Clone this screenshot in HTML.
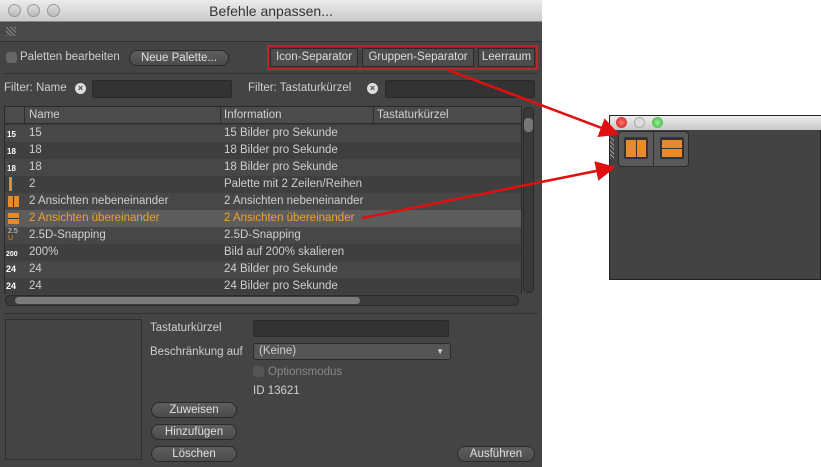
<!DOCTYPE html>
<html><head><meta charset="utf-8"><style>
*{box-sizing:border-box;margin:0;padding:0}
body{width:821px;height:467px;background:#fff;position:relative;overflow:hidden;font-family:"Liberation Sans","DejaVu Sans",sans-serif;font-size:11.5px;color:#cfcfcf}
.a{position:absolute}
.win{left:0;top:0;width:542px;height:467px;background:#444}
.tb{left:0;top:0;width:542px;height:22px;background:linear-gradient(#ececec,#c9c9c9);border-bottom:1px solid #888;color:#333;font-size:14px;text-align:center;line-height:22px}
.dot{width:13px;height:13px;border-radius:50%;background:linear-gradient(#ddd,#bbb);border:1px solid #999;top:4px}
.btn{background:linear-gradient(#5e5e5e,#4b4b4b);border:1px solid #2a2a2a;border-radius:9px;color:#e0e0e0;text-align:center;font-size:11.5px;line-height:14px;height:16px}
.sq{background:#4d4d4d;border:1px solid #2b2b2b;color:#ddd;text-align:center;line-height:17px;height:19px;font-size:11.5px}
.inp{background:#333;border:1px solid #2a2a2a;border-radius:2px}
.row{left:5px;width:516px;height:17px;line-height:17px}
.row span{position:absolute}
.ic{left:3px;top:3px;width:11px;height:11px;background:#e8892a}
</style></head><body>
<div class="a win"></div>
<div class="a tb">Befehle anpassen...</div>
<div class="a dot" style="left:8px"></div><div class="a dot" style="left:27px"></div><div class="a dot" style="left:47px"></div>
<div class="a" style="left:0;top:23px;width:542px;height:19px;background:#4a4a4a;border-bottom:1px solid #333"></div>
<div class="a" style="left:6px;top:27px;width:10px;height:9px;background:repeating-linear-gradient(45deg,#888 0 1px,transparent 1px 3px)"></div>
<div class="a" style="left:6px;top:52px;width:11px;height:11px;border-radius:3px;background:#666"></div>
<div class="a" style="left:20px;top:51px">Paletten bearbeiten</div>
<div class="a btn" style="left:129px;top:50px;width:100px">Neue Palette...</div>
<div class="a" style="left:267px;top:45px;width:271px;height:25px;border:2px solid #b8262a"></div>
<div class="a sq" style="left:270px;top:48px;width:88px">Icon-Separator</div>
<div class="a sq" style="left:362px;top:48px;width:112px">Gruppen-Separator</div>
<div class="a sq" style="left:478px;top:48px;width:57px">Leerraum</div>
<div class="a" style="left:4px;top:73px;width:534px;height:1px;background:#333"></div>
<div class="a" style="left:4px;top:82px">Filter: Name</div>
<div class="a" style="left:75px;top:83px;width:11px;height:11px;border-radius:50%;background:#ddd;color:#444;font-size:9px;line-height:11px;text-align:center;font-weight:bold">×</div>
<div class="a inp" style="left:92px;top:80px;width:140px;height:18px"></div>
<div class="a" style="left:248px;top:82px">Filter: Tastaturkürzel</div>
<div class="a" style="left:367px;top:83px;width:11px;height:11px;border-radius:50%;background:#ddd;color:#444;font-size:9px;line-height:11px;text-align:center;font-weight:bold">×</div>
<div class="a inp" style="left:385px;top:80px;width:150px;height:18px"></div>
<div class="a" style="left:4px;top:106px;width:518px;height:188px;background:#3c3c3c;border:1px solid #2a2a2a"></div>
<div class="a" style="left:5px;top:107px;width:516px;height:17px;background:#4b4b4b;border-bottom:1px solid #2e2e2e"></div>
<div class="a" style="left:24px;top:107px;width:1px;height:17px;background:#2e2e2e"></div>
<div class="a" style="left:220px;top:107px;width:1px;height:17px;background:#2e2e2e"></div>
<div class="a" style="left:373px;top:107px;width:1px;height:17px;background:#2e2e2e"></div>
<div class="a" style="left:29px;top:109px">Name</div>
<div class="a" style="left:224px;top:109px">Information</div>
<div class="a" style="left:377px;top:109px">Tastaturkürzel</div>
<div class="a row" style="top:125px;background:#474747"><span style="color:#fff;font-size:8px;font-weight:bold;left:2px;top:1px">15</span><span style="left:24px">15</span><span style="left:219px">15 Bilder pro Sekunde</span></div>
<div class="a row" style="top:142px;background:#3f3f3f"><span style="color:#fff;font-size:8px;font-weight:bold;left:2px;top:1px">18</span><span style="left:24px">18</span><span style="left:219px">18 Bilder pro Sekunde</span></div>
<div class="a row" style="top:159px;background:#474747"><span style="color:#fff;font-size:8px;font-weight:bold;left:2px;top:1px">18</span><span style="left:24px">18</span><span style="left:219px">18 Bilder pro Sekunde</span></div>
<div class="a row" style="top:176px;background:#3f3f3f"><span class="ic" style="width:3px;height:14px;top:1px;left:4px"></span><span style="left:24px">2</span><span style="left:219px">Palette mit 2 Zeilen/Reihen</span></div>
<div class="a row" style="top:193px;background:#474747"><span class="ic" style="background:linear-gradient(90deg,#e8892a 45%,#333 45% 55%,#e8892a 55%)"></span><span style="left:24px">2 Ansichten nebeneinander</span><span style="left:219px">2 Ansichten nebeneinander</span></div>
<div class="a row" style="top:210px;background:#5d5d5d;color:#f0a030"><span class="ic" style="background:linear-gradient(#e8892a 45%,#333 45% 55%,#e8892a 55%)"></span><span style="left:24px">2 Ansichten übereinander</span><span style="left:219px">2 Ansichten übereinander</span></div>
<div class="a row" style="top:227px;background:#474747"><span style="left:3px;top:1px;font-size:7px;line-height:7px;color:#ddd">2.5<br><span style="position:static;color:#e8892a">U</span></span><span style="left:24px">2.5D-Snapping</span><span style="left:219px">2.5D-Snapping</span></div>
<div class="a row" style="top:244px;background:#3f3f3f"><span style="left:1px;font-size:7px;color:#fff;font-weight:bold;top:2px">200</span><span style="left:24px">200%</span><span style="left:219px">Bild auf 200% skalieren</span></div>
<div class="a row" style="top:261px;background:#474747"><span style="left:1px;font-size:9px;color:#fff;font-weight:bold">24</span><span style="left:24px">24</span><span style="left:219px">24 Bilder pro Sekunde</span></div>
<div class="a row" style="top:278px;background:#3f3f3f;height:16px"><span style="left:1px;font-size:9px;color:#fff;font-weight:bold">24</span><span style="left:24px">24</span><span style="left:219px">24 Bilder pro Sekunde</span></div>
<div class="a" style="left:523px;top:107px;width:11px;height:186px;background:#3a3a3a;border:1px solid #2a2a2a;border-radius:5px"></div>
<div class="a" style="left:524px;top:118px;width:9px;height:14px;background:#777;border-radius:4px"></div>
<div class="a" style="left:5px;top:295px;width:514px;height:11px;background:#3a3a3a;border:1px solid #2a2a2a;border-radius:5px"></div>
<div class="a" style="left:15px;top:297px;width:345px;height:7px;background:#7a7a7a;border-radius:4px"></div>
<div class="a" style="left:4px;top:313px;width:534px;height:1px;background:#333"></div>
<div class="a" style="left:5px;top:319px;width:137px;height:141px;border:1px solid #2e2e2e"></div>
<div class="a" style="left:150px;top:322px">Tastaturkürzel</div>
<div class="a inp" style="left:253px;top:320px;width:196px;height:17px"></div>
<div class="a" style="left:150px;top:346px">Beschränkung auf</div>
<div class="a" style="left:253px;top:343px;width:198px;height:17px;background:#555;border:1px solid #2a2a2a;border-radius:3px;padding-left:5px;line-height:15px">(Keine)<span style="position:absolute;right:6px;top:0;font-size:8px">▼</span></div>
<div class="a" style="left:253px;top:366px;width:11px;height:11px;border-radius:3px;background:#555"></div>
<div class="a" style="left:268px;top:366px;color:#888">Optionsmodus</div>
<div class="a" style="left:253px;top:385px">ID 13621</div>
<div class="a btn" style="left:151px;top:402px;width:86px">Zuweisen</div>
<div class="a btn" style="left:151px;top:424px;width:86px">Hinzufügen</div>
<div class="a btn" style="left:151px;top:446px;width:86px">Löschen</div>
<div class="a btn" style="left:457px;top:446px;width:78px">Ausführen</div>
<div class="a" style="left:609px;top:115px;width:212px;height:165px;background:#434343;border:1px solid #222"></div>
<div class="a" style="left:610px;top:116px;width:211px;height:14px;background:linear-gradient(#eee,#c8c8c8)"></div>
<div class="a" style="left:616px;top:117px;width:11px;height:11px;border-radius:50%;background:radial-gradient(#f77,#c11)"></div>
<div class="a" style="left:634px;top:117px;width:11px;height:11px;border-radius:50%;background:#ddd;border:1px solid #aaa"></div>
<div class="a" style="left:652px;top:117px;width:11px;height:11px;border-radius:50%;background:radial-gradient(#9e9,#3a3)"></div>
<div class="a" style="left:610px;top:137px;width:4px;height:22px;background:repeating-linear-gradient(45deg,#999 0 1px,transparent 1px 3px)"></div>
<div class="a" style="left:618px;top:131px;width:71px;height:36px;background:#595959;border:1px solid #2a2a2a;border-radius:4px"></div>
<div class="a" style="left:653px;top:132px;width:1px;height:34px;background:#333"></div>
<div class="a" style="left:624px;top:137px;width:24px;height:22px;background:#e8892a;border:2px solid #333;border-top-width:3px;border-radius:2px"><div style="position:absolute;left:10px;top:0;width:1px;height:100%;background:#333"></div></div>
<div class="a" style="left:660px;top:137px;width:24px;height:22px;background:#e8892a;border:2px solid #333;border-top-width:3px;border-radius:2px"><div style="position:absolute;left:0;top:8px;width:100%;height:1px;background:#333"></div></div>
<svg class="a" style="left:0;top:0" width="821" height="467"><defs><marker id="m" markerWidth="8" markerHeight="8" refX="6" refY="4" orient="auto"><path d="M0,0 L8,4 L0,8z" fill="#e01010"/></marker></defs>
<line x1="448" y1="70" x2="615" y2="133" stroke="#e01010" stroke-width="2.5" marker-end="url(#m)"/>
<line x1="362" y1="218" x2="611" y2="168" stroke="#e01010" stroke-width="2.5" marker-end="url(#m)"/></svg>
</body></html>
